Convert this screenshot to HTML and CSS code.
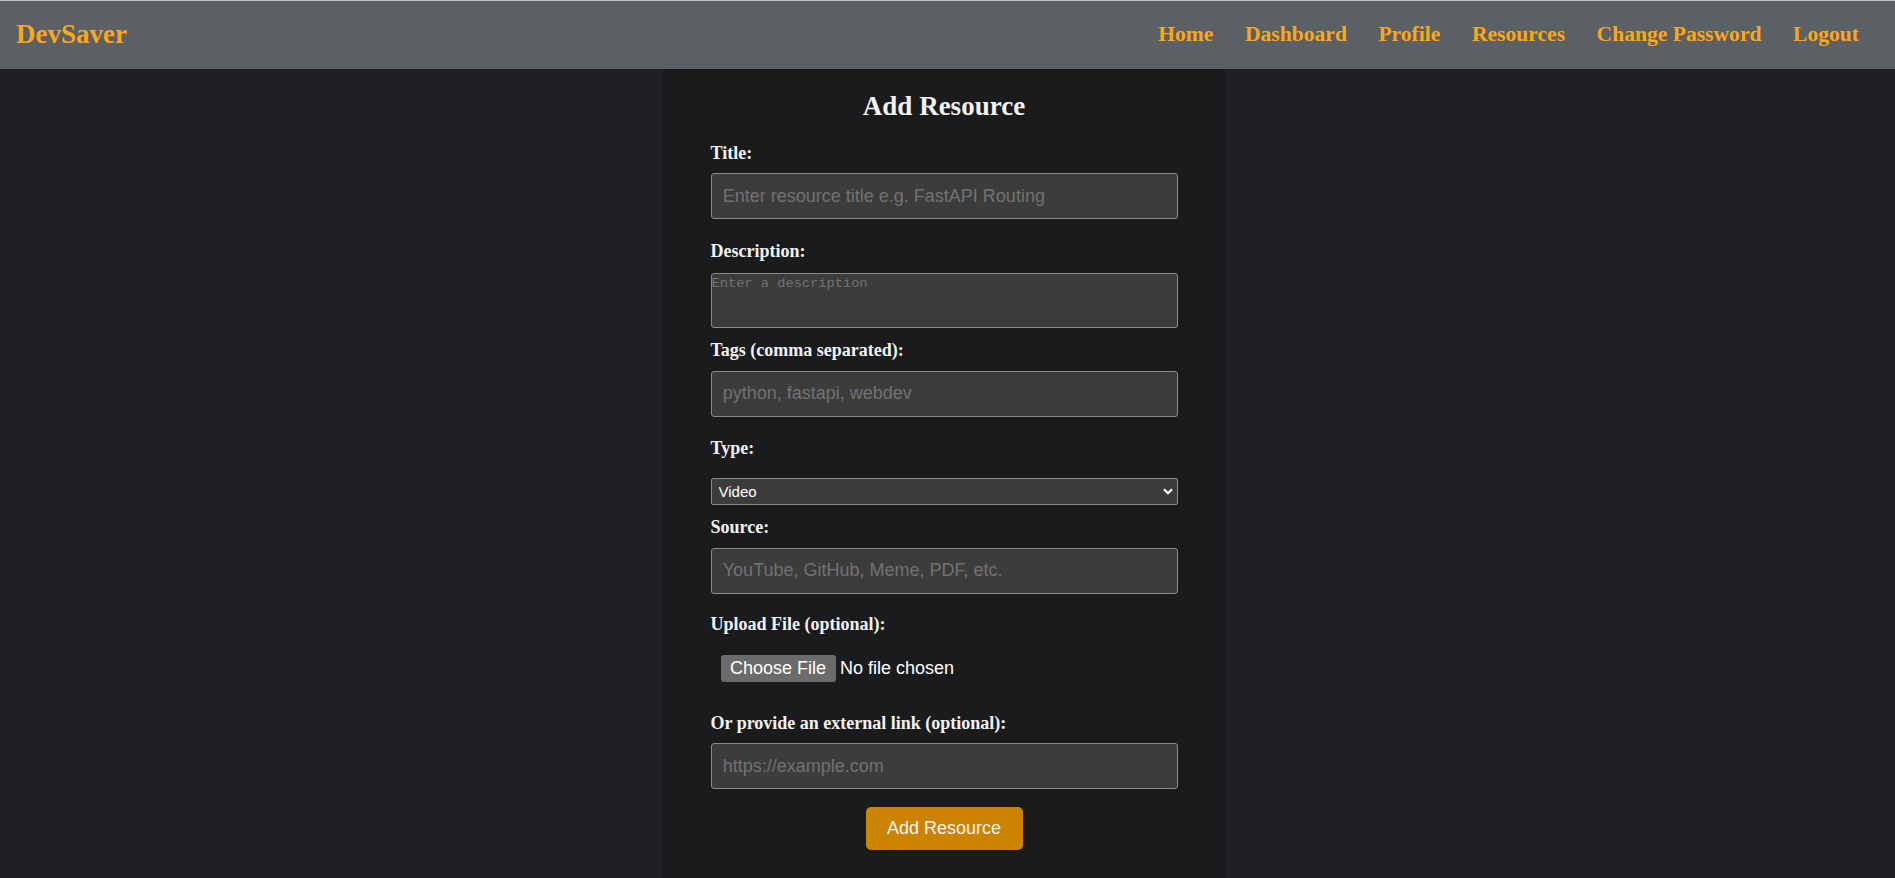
FILE: index.html
```html
<!DOCTYPE html>
<html lang="en">
<head>
<meta charset="utf-8">
<title>DevSaver - Add Resource</title>
<link rel="stylesheet" href="styles.css">
</head>
<body>
<header class="topbar">
  <a class="brand" href="#">DevSaver</a>
  <nav class="nav">
    <a class="nav-link" href="#">Home</a>
    <a class="nav-link" href="#">Dashboard</a>
    <a class="nav-link" href="#">Profile</a>
    <a class="nav-link" href="#">Resources</a>
    <a class="nav-link" href="#">Change Password</a>
    <a class="nav-link" href="#">Logout</a>
  </nav>
</header>
<main class="page">
  <section class="card">
    <h2 class="card-title">Add Resource</h2>
    <form class="form">
      <label class="field-label" for="title">Title:</label>
      <input class="field-input field-input-first" id="title" type="text" placeholder="Enter resource title e.g. FastAPI Routing">

      <label class="field-label" for="description">Description:</label>
      <textarea class="field-textarea" id="description" placeholder="Enter a description"></textarea>

      <label class="field-label" for="tags">Tags (comma separated):</label>
      <input class="field-input field-input-tags" id="tags" type="text" placeholder="python, fastapi, webdev">

      <label class="field-label" for="type">Type:</label>
      <div class="select-wrap">
        <select class="field-select" id="type">
          <option>Video</option>
          <option>Article</option>
          <option>Repository</option>
          <option>Meme</option>
          <option>PDF</option>
        </select>
        <svg class="select-arrow" width="10" height="7" viewBox="0 0 10 7" aria-hidden="true">
          <path d="M1 1.3 L5 5.3 L9 1.3" fill="none" stroke="#ffffff" stroke-width="2.2"/>
        </svg>
      </div>

      <label class="field-label" for="source">Source:</label>
      <input class="field-input" id="source" type="text" placeholder="YouTube, GitHub, Meme, PDF, etc.">

      <label class="field-label" for="file">Upload File (optional):</label>
      <input class="file-input" id="file" type="file">

      <label class="field-label" for="link">Or provide an external link (optional):</label>
      <input class="field-input field-input-last" id="link" type="text" placeholder="https://example.com">

      <button class="submit-button" type="submit">Add Resource</button>
    </form>
  </section>
</main>
</body>
</html>
```

FILE: styles.css
```css
html, body {
  margin: 0;
  padding: 0;
}

body {
  background: #1f2023;
  font-family: "Liberation Serif", "Times New Roman", serif;
  color: #f0f0f0;
}

.topbar {
  box-sizing: border-box;
  height: 69px;
  border-top: 1px solid #c2c4c5;
  background: #5a6063;
  display: flex;
  align-items: center;
  justify-content: space-between;
  padding: 0 36px 2px 16px;
}

.brand {
  font-family: "Liberation Serif", "Times New Roman", serif;
  font-weight: bold;
  font-size: 27px;
  color: #fba71b;
  text-decoration: none;
}

.nav {
  display: flex;
  align-items: center;
  gap: 31.5px;
}

.nav-link {
  font-family: "Liberation Serif", "Times New Roman", serif;
  font-weight: bold;
  font-size: 21.6px;
  color: #fba71b;
  text-decoration: none;
}

.page {
  display: block;
}

.card {
  box-sizing: border-box;
  width: 563px;
  min-height: calc(100vh - 69px);
  margin-left: calc(50% - 285px);
  background: #1a1b1d;
  padding: 22.4px 48px 20px 48px;
}

.card-title {
  margin: 0 0 20.4px 0;
  font-size: 27px;
  font-weight: bold;
  text-align: center;
  color: #f2f2f2;
  line-height: normal;
}

.form {
  display: flex;
  flex-direction: column;
}

.field-label {
  display: block;
  font-family: "Liberation Serif", "Times New Roman", serif;
  font-weight: bold;
  font-size: 18px;
  line-height: normal;
  color: #f2f2f2;
  margin: 0 0 9.3px 0;
}

.field-input {
  box-sizing: border-box;
  display: block;
  width: 100%;
  height: 46.4px;
  margin: 0 0 20.5px 0;
  padding: 0 11.25px;
  font-family: "Liberation Sans", Arial, sans-serif;
  font-size: 18px;
  color: #ffffff;
  background: #3c3c3c;
  border: 1px solid #8a8a8a;
  border-radius: 3px;
  outline: none;
}

.field-input-first {
  margin-bottom: 21.5px;
}

.field-input-tags {
  margin-bottom: 20.6px;
}

.field-input-last {
  margin-bottom: 17.5px;
}

.field-input::placeholder,
.field-textarea::placeholder {
  color: #727272;
  opacity: 1;
}

.field-textarea {
  box-sizing: border-box;
  display: block;
  width: 100%;
  height: 55px;
  margin: 1.5px 0 12.5px 0;
  padding: 2.5px 0;
  font-family: "Liberation Mono", "Courier New", monospace;
  font-size: 13.7px;
  color: #ffffff;
  background: #3c3c3c;
  border: 1px solid #8a8a8a;
  border-radius: 3px;
  resize: none;
  outline: none;
}

.select-wrap {
  position: relative;
  margin: 9.8px 0 12.2px 0;
}

.field-select {
  box-sizing: border-box;
  display: block;
  width: 100%;
  height: 27.4px;
  margin: 0;
  padding: 0 7px;
  font-family: "Liberation Sans", Arial, sans-serif;
  font-size: 15px;
  color: #ffffff;
  background: #3c3c3c;
  border: 1px solid #8a8a8a;
  border-radius: 2px;
  appearance: none;
  -webkit-appearance: none;
  outline: none;
}

.select-arrow {
  position: absolute;
  right: 5px;
  top: 10.5px;
  pointer-events: none;
}

.file-input {
  box-sizing: border-box;
  display: block;
  width: 100%;
  margin: 0 0 20px 0;
  padding: 10.5px 10px;
  font-family: "Liberation Sans", Arial, sans-serif;
  font-size: 18px;
  color: #ffffff;
  background: transparent;
  border: none;
}

.file-input::file-selector-button {
  box-sizing: border-box;
  height: 27px;
  margin: 0 4.5px 0 0;
  padding: 0 9.5px;
  font-family: "Liberation Sans", Arial, sans-serif;
  font-size: 18px;
  color: #ffffff;
  background: #6b6b6b;
  border: none;
  border-radius: 3px;
}

.submit-button {
  align-self: center;
  box-sizing: border-box;
  width: 157px;
  height: 42.7px;
  padding: 0 21px;
  font-family: "Liberation Sans", Arial, sans-serif;
  font-size: 18px;
  color: #f0f0f0;
  background: #cc8400;
  border: none;
  border-radius: 5px;
  cursor: pointer;
}
```
